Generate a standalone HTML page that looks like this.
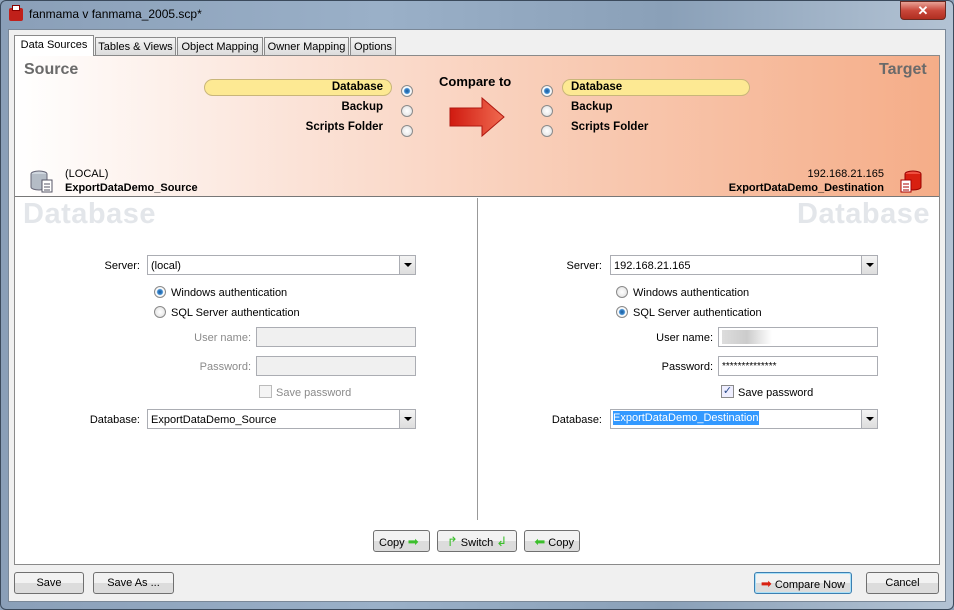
<!DOCTYPE html>
<html><head><style>
*{box-sizing:border-box;margin:0;padding:0}
body{width:954px;height:610px;overflow:hidden;font-family:"Liberation Sans",sans-serif;font-size:11px;color:#000;position:relative;background:#8ea3bb}
.a{position:absolute}
.win{left:0;top:0;width:954px;height:610px;border:1px solid #3b4a5c;border-radius:6px;background:linear-gradient(90deg,#8a9fb8 0%,#9ab0c8 40%,#8aa0b8 70%,#b3c3d4 100%)}
.client{left:8px;top:29px;width:938px;height:573px;background:#f0f0f0;border:1px solid #7a8898}
.tab{top:37px;height:18px;border:1px solid #8a8a8a;border-bottom:none;background:linear-gradient(#f4f4f4,#dcdcdc);font-size:11px;padding:3px 0 0;text-align:center;white-space:nowrap;overflow:hidden}
.panel{left:14px;top:55px;width:926px;height:510px;border:1px solid #8a8a8a;background:#fff}
.hdr{left:15px;top:56px;width:924px;height:141px;background:linear-gradient(90deg,#fff 0%,#fbe3d8 30%,#f9cfba 55%,#f5ad88 100%);border-bottom:1px solid #777}
.b{font-weight:bold;font-size:11.5px}
.radio{width:12px;height:12px;border-radius:50%;border:1px solid #8a8a8a;background:radial-gradient(#fff,#ddd)}
.radio.on{background:radial-gradient(circle,#1a5a9a 0,#3c8ad0 2.5px,#fff 3.5px,#e8e8e8 6px)}
.pill{height:17px;border:1px solid #c9b67a;border-radius:9px;background:#fde993}
.input{height:20px;border:1px solid #abadb3;background:#fff;font-size:11px;padding:4px 3px 0}
.dd{position:absolute;right:0;top:0;width:16px;height:18px;border-left:1px solid #abadb3;background:linear-gradient(#f4f4f4,#ddd)}
.dd:after{content:"";position:absolute;left:4px;top:7px;border:4px solid transparent;border-top:4px solid #000;border-bottom:none}
.lbl{text-align:right;font-size:11px}
.btn{height:22px;border:1px solid #707070;border-radius:3px;background:linear-gradient(#f2f2f2 50%,#dcdcdc 50%);font-size:11px;text-align:center;line-height:21px}
.grey{color:#8a8a8a}
.ga{color:#3cbf2c;font-size:13px}
</style></head><body>
<div class="a win"></div>
<div class="a" style="left:9px;top:8px;width:14px;height:13px;background:#c0201a;border-radius:2px"></div>
<div class="a" style="left:12px;top:5px;width:8px;height:6px;background:#fff;border:1px solid #800"></div>
<div class="a" style="left:29px;top:7px;font-size:12px">fanmama v fanmama_2005.scp*</div>
<div class="a" style="left:900px;top:1px;width:46px;height:19px;border:1px solid #6b2a22;border-radius:0 0 4px 4px;background:linear-gradient(#e8a296,#c9473a 50%,#b02e20);color:#fff;text-align:center;font-weight:bold;font-size:13px;line-height:17px">✕</div>
<div class="a client"></div>
<div class="a panel"></div>
<div class="a tab" style="left:14px;top:35px;height:21px;background:#fff;width:80px;padding-top:3px">Data Sources</div>
<div class="a tab" style="left:95px;width:81px">Tables &amp; Views</div>
<div class="a tab" style="left:177px;width:86px">Object Mapping</div>
<div class="a tab" style="left:264px;width:85px">Owner Mapping</div>
<div class="a tab" style="left:350px;width:46px">Options</div>
<div class="a hdr"></div>
<div class="a" style="left:24px;top:61px;font-size:16px;font-weight:bold;color:#6a6a6a">Source</div>
<div class="a" style="left:879px;top:61px;font-size:16px;font-weight:bold;color:#6a6a6a">Target</div>
<div class="a pill" style="left:204px;top:79px;width:188px"></div>
<div class="a b" style="left:200px;top:81px;width:183px;text-align:right">Database</div>
<div class="a b" style="left:200px;top:101px;width:183px;text-align:right">Backup</div>
<div class="a b" style="left:200px;top:121px;width:183px;text-align:right">Scripts Folder</div>
<div class="a radio on" style="left:401px;top:85px"></div>
<div class="a radio" style="left:401px;top:105px"></div>
<div class="a radio" style="left:401px;top:125px"></div>
<div class="a b" style="left:439px;top:74px;font-size:13px">Compare to</div>
<svg class="a" style="left:448px;top:96px" width="58" height="42"><defs><linearGradient id="g" x1="0" x2="1"><stop offset="0" stop-color="#d01a10"/><stop offset="1" stop-color="#f06a50"/></linearGradient></defs><path d="M2 12H34V2L56 21 34 40V30H2Z" fill="url(#g)" stroke="#b01810"/></svg>
<div class="a pill" style="left:562px;top:79px;width:188px"></div>
<div class="a b" style="left:571px;top:81px">Database</div>
<div class="a b" style="left:571px;top:101px">Backup</div>
<div class="a b" style="left:571px;top:121px">Scripts Folder</div>
<div class="a radio on" style="left:541px;top:85px"></div>
<div class="a radio" style="left:541px;top:105px"></div>
<div class="a radio" style="left:541px;top:125px"></div>
<svg class="a" style="left:30px;top:170px" width="24" height="24"><ellipse cx="9" cy="4" rx="8" ry="3" fill="#cfd6de" stroke="#667"/><path d="M1 4V17a8 3 0 0 0 16 0V4" fill="#b4bcc6" stroke="#667"/><rect x="12" y="10" width="10" height="12" fill="#fff" stroke="#556"/><path d="M14 14h6M14 17h6M14 20h6" stroke="#556"/></svg>
<div class="a" style="left:65px;top:168px;font-size:11px">(LOCAL)</div>
<div class="a b" style="left:65px;top:182px;font-size:11px">ExportDataDemo_Source</div>
<div class="a" style="left:700px;top:168px;width:184px;text-align:right;font-size:11px">192.168.21.165</div>
<div class="a b" style="left:680px;top:182px;width:204px;text-align:right;font-size:11px">ExportDataDemo_Destination</div>
<svg class="a" style="left:899px;top:170px" width="24" height="24"><ellipse cx="14" cy="4" rx="8" ry="3" fill="#f05040" stroke="#900"/><path d="M6 4V17a8 3 0 0 0 16 0V4" fill="#d82010" stroke="#900"/><rect x="2" y="10" width="10" height="12" fill="#fff" stroke="#a00"/><path d="M4 14h6M4 17h6M4 20h6" stroke="#a00"/></svg>
<div class="a" style="left:477px;top:198px;width:1px;height:322px;background:#999"></div>
<div class="a" style="left:23px;top:198px;font-size:29px;font-weight:bold;color:#e3e6ea;letter-spacing:0.5px">Database</div>
<div class="a" style="left:797px;top:198px;font-size:29px;font-weight:bold;color:#e3e6ea;letter-spacing:0.5px">Database</div>
<!-- left form -->
<div class="a lbl" style="left:60px;top:260px;width:80px">Server:</div>
<div class="a input" style="left:147px;top:255px;width:269px">(local)<span class="dd"></span></div>
<div class="a radio on" style="left:154px;top:286px"></div><div class="a" style="left:171px;top:287px">Windows authentication</div>
<div class="a radio" style="left:154px;top:306px"></div><div class="a" style="left:171px;top:307px">SQL Server authentication</div>
<div class="a lbl grey" style="left:160px;top:332px;width:91px">User name:</div>
<div class="a input" style="left:256px;top:327px;width:160px;background:#f0f0f0"></div>
<div class="a lbl grey" style="left:160px;top:361px;width:91px">Password:</div>
<div class="a input" style="left:256px;top:356px;width:160px;background:#f0f0f0"></div>
<div class="a" style="left:259px;top:385px;width:13px;height:13px;border:1px solid #bbb;background:#f4f4f4"></div>
<div class="a grey" style="left:276px;top:387px">Save password</div>
<div class="a lbl" style="left:60px;top:414px;width:80px">Database:</div>
<div class="a input" style="left:147px;top:409px;width:269px">ExportDataDemo_Source<span class="dd"></span></div>
<!-- right form -->
<div class="a lbl" style="left:520px;top:260px;width:82px">Server:</div>
<div class="a input" style="left:610px;top:255px;width:268px">192.168.21.165<span class="dd"></span></div>
<div class="a radio" style="left:616px;top:286px"></div><div class="a" style="left:633px;top:287px">Windows authentication</div>
<div class="a radio on" style="left:616px;top:306px"></div><div class="a" style="left:633px;top:307px">SQL Server authentication</div>
<div class="a lbl" style="left:620px;top:332px;width:93px">User name:</div>
<div class="a input" style="left:718px;top:327px;width:160px;padding-top:2px"><span style="display:inline-block;width:50px;height:14px;background:linear-gradient(90deg,#ddd,#ccc,#fff)"></span></div>
<div class="a lbl" style="left:620px;top:361px;width:93px">Password:</div>
<div class="a input" style="left:718px;top:356px;width:160px;font-size:10px;line-height:12px">**************</div>
<div class="a" style="left:721px;top:385px;width:13px;height:13px;border:1px solid #8a8a8a;background:#eef;font-size:11px;line-height:11px;text-align:center;color:#2a4a8a">✓</div>
<div class="a" style="left:738px;top:387px">Save password</div>
<div class="a lbl" style="left:520px;top:414px;width:82px">Database:</div>
<div class="a input" style="left:610px;top:409px;width:268px;padding-left:2px;padding-top:2px"><span style="background:#3399ff;color:#fff;padding:1px 0">ExportDataDemo_Destination</span><span class="dd"></span></div>
<!-- copy buttons -->
<div class="a btn" style="left:373px;top:530px;width:57px;text-align:left;padding-left:5px">Copy <span class="ga">➡</span></div>
<div class="a btn" style="left:437px;top:530px;width:80px"><span class="ga">↱</span> Switch <span class="ga">↲</span></div>
<div class="a btn" style="left:524px;top:530px;width:56px;text-align:right;padding-right:5px"><span class="ga">⬅</span> Copy</div>
<!-- bottom -->
<div class="a btn" style="left:14px;top:572px;width:70px">Save</div>
<div class="a btn" style="left:93px;top:572px;width:81px">Save As ...</div>
<div class="a btn" style="left:754px;top:572px;width:98px;border-color:#3c7fb1;box-shadow:inset 0 0 0 1px #a8e0f8"><span style="color:#d82010;font-size:13px">➡</span> Compare Now</div>
<div class="a btn" style="left:866px;top:572px;width:73px">Cancel</div>
</body></html>
